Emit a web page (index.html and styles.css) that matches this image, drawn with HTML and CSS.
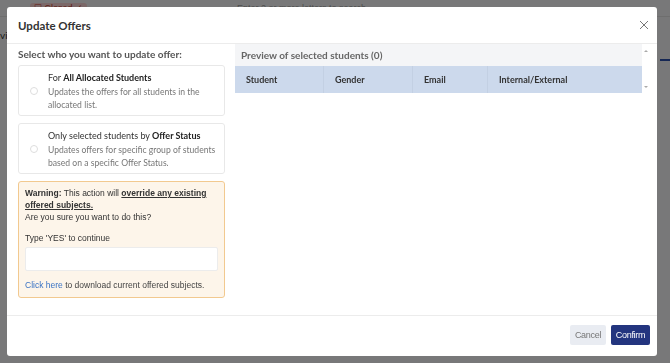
FILE: index.html
```html
<!DOCTYPE html>
<html>
<head>
<meta charset="utf-8">
<link rel="stylesheet" href="styles.css">
</head>
<body>
<div class="page">
  <div class="topbar">
    <span class="tag">&#9744; Closed &#10003;</span>
    <span class="search">Enter 2 or more letters to search</span>
  </div>
  <div class="bg-row">
    <span class="frag-left">vi</span>
    <span class="frag-right">&nbsp;</span>
  </div>
</div>
<div class="backdrop"></div>
<div class="modal">
  <div class="modal-header">
    <h1 class="title">Update Offers</h1>
    <svg class="close" width="10" height="10" viewBox="0 0 10 10"><path d="M1 1L9 9M9 1L1 9" stroke="#777" stroke-width="1"/></svg>
  </div>
  <div class="modal-body">
    <div class="left">
      <div class="label">Select who you want to update offer:</div>
      <div class="option">
        <span class="radio"></span>
        <div class="opt-text">
          <div class="opt-title">For <b>All Allocated Students</b></div>
          <div class="opt-desc">Updates the offers for all students in the allocated list.</div>
        </div>
      </div>
      <div class="option">
        <span class="radio"></span>
        <div class="opt-text">
          <div class="opt-title">Only selected students by <b>Offer Status</b></div>
          <div class="opt-desc">Updates offers for specific group of students based on a specific Offer Status.</div>
        </div>
      </div>
      <div class="warning">
        <p class="line"><b>Warning:</b> This action will <b class="u">override any existing offered subjects.</b></p>
        <p class="line">Are you sure you want to do this?</p>
        <p class="line type">Type 'YES' to continue</p>
        <div class="input"></div>
        <p class="line dl"><span class="link">Click here</span> to download current offered subjects.</p>
      </div>
    </div>
    <div class="right">
      <div class="table-wrap">
        <div class="preview">Preview of selected students (0)</div>
        <div class="thead">
          <div class="th c1">Student</div>
          <div class="th c2">Gender</div>
          <div class="th c3">Email</div>
          <div class="th c4">Internal/External</div>
        </div>
      </div>
      <div class="scroll">
        <span class="arrow up"></span>
        <span class="arrow down"></span>
      </div>
    </div>
  </div>
  <div class="modal-footer">
    <button class="btn cancel">Cancel</button>
    <button class="btn confirm">Confirm</button>
  </div>
</div>
</body>
</html>
```
FILE: styles.css
```css
html, body {
  margin: 0;
  padding: 0;
  width: 670px;
  height: 363px;
  overflow: hidden;
  font-family: "Lato", "Liberation Sans", sans-serif;
}
.page {
  width: 670px;
  height: 363px;
  background: #f0f1f3;
}
.topbar {
  height: 16px;
  display: flex;
  gap: 150px;
  align-items: center;
  padding-left: 30px;
  font-size: 9px;
  font-family: "Liberation Sans", sans-serif;
  border-bottom: 1px solid #ddd;
}
.tag {
  color: #c0392b;
  background: #f7d0d0;
  padding: 0 4px;
  border-radius: 3px;
}
.search { color: #999; }
.bg-row {
  display: flex;
  justify-content: space-between;
  font-size: 10px;
  color: #333;
  padding-top: 12px;
}
.frag-right {
  width: 10px;
  border-top: 2px solid #2a4fa8;
  margin-top: 30px;
}
.backdrop {
  position: fixed;
  inset: 0;
  background: rgba(0, 0, 0, 0.5);
}
.modal {
  position: fixed;
  left: 7px;
  top: 7px;
  width: 650px;
  height: 349px;
  background: #fff;
  border-radius: 3px;
  display: flex;
  flex-direction: column;
}
.modal-header {
  height: 36px;
  border-bottom: 1px solid #ececec;
  display: flex;
  align-items: center;
  justify-content: space-between;
  padding: 0 8px 0 11px;
}
.title {
  margin: 0;
  font-size: 11.5px;
  font-weight: 700;
  color: #333;
}
.modal-body {
  flex: 1;
  display: flex;
  padding: 0 7px 0 11px;
  gap: 10px;
}
.left {
  width: 207px;
  display: flex;
  flex-direction: column;
}
.label {
  font-size: 10px;
  font-weight: 700;
  color: #555;
  height: 14px;
  margin-top: 3px;
  margin-bottom: 4px;
  line-height: 14px;
}
.option {
  border: 1px solid #e8e8e8;
  border-radius: 3px;
  margin-bottom: 7px;
  display: flex;
  align-items: center;
  box-sizing: border-box;
  height: 51px;
}
.radio {
  width: 6px;
  height: 6px;
  border: 1px solid #ddd;
  border-radius: 50%;
  margin: 0 10px 0 11px;
  flex: none;
}
.opt-text {
  font-size: 8.6px;
  line-height: 13px;
  padding-top: 1px;
}
.opt-title { color: #333; margin-bottom: 2px; font-size: 9px; }
.opt-title b { font-weight: 700; color: #222; }
.opt-desc { color: #777; }
.warning {
  background: #fdf5ea;
  border: 1px solid #f2c98f;
  border-radius: 3px;
  height: 117px;
  box-sizing: border-box;
  padding: 5px 6px 0 6px;
  font-family: "Liberation Sans", sans-serif;
  font-size: 8.5px;
  line-height: 12px;
  color: #333;
}
.line { margin: 0; }
.warning b { font-weight: 700; }
.warning .u { text-decoration: underline; }
.type { margin-top: 9px; }
.input {
  height: 22px;
  background: #fff;
  border: 1px solid #ececec;
  margin-top: 3px;
  border-radius: 2px;
}
.dl { margin-top: 8px; color: #444; }
.link { color: #3a73c4; }
.right {
  flex: 1;
  display: flex;
}
.table-wrap { flex: 1; }
.preview {
  background: #f4f5f7;
  height: 22px;
  line-height: 22px;
  font-size: 10px;
  font-weight: 700;
  color: #666;
  padding-left: 6px;
}
.thead {
  background: #ccd9ec;
  height: 27px;
  display: flex;
  align-items: center;
  font-size: 9px;
  font-weight: 700;
  color: #333;
}
.th {
  height: 27px;
  line-height: 27px;
  padding-left: 11px;
  box-sizing: border-box;
  border-right: 1px solid #c3d0e3;
}
.c1 { width: 89px; }
.c2 { width: 89px; }
.c3 { width: 75px; }
.c4 { flex: 1; border-right: 0; }
.scroll {
  width: 8px;
  position: relative;
  height: 49px;
}
.arrow {
  position: absolute;
  left: 2px;
  width: 0;
  height: 0;
  border-left: 2px solid transparent;
  border-right: 2px solid transparent;
}
.arrow.up { top: 6px; border-bottom: 2px solid #aaa; }
.arrow.down { top: 42px; border-top: 2px solid #aaa; }
.modal-footer {
  height: 38px;
  border-top: 1px solid #ececec;
  display: flex;
  justify-content: flex-end;
  align-items: center;
  gap: 5px;
  padding: 0 7px 2px 0;
}
.btn {
  height: 20px;
  border: 0;
  border-radius: 2px;
  font-family: "Liberation Sans", sans-serif;
  font-size: 9px;
  letter-spacing: -0.3px;
  padding: 0 4px;
}
.cancel { background: #e9ecf2; color: #777; width: 36px; }
.confirm { background: #23357f; color: #fff; width: 39px; }
```
